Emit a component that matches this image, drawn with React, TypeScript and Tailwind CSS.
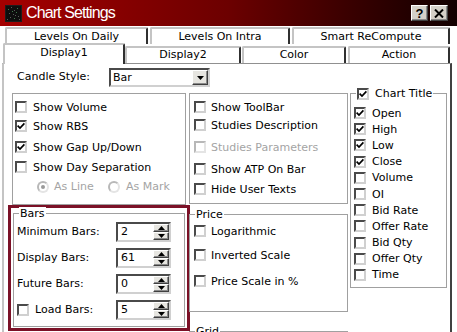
import React from 'react';

const sunken = 'border-2 border-t-[#4a4a4a] border-l-[#4a4a4a] border-r-[#d0d0d0] border-b-[#d0d0d0]';
const sunkenOff = 'border-2 border-t-[#b8b8b8] border-l-[#b8b8b8] border-r-[#e4e4e4] border-b-[#e4e4e4]';
const raised = 'border border-t-white border-l-white border-r-[#404040] border-b-[#404040] shadow-[inset_-1px_-1px_0_#8a8a8a]';

function CheckBox({ checked = false, disabled = false }: { checked?: boolean; disabled?: boolean }) {
  return (
    <span className={`flex shrink-0 items-center justify-center w-[12px] h-[12px] bg-white ${disabled ? sunkenOff : sunken}`}>
      {checked && (
        <svg width="8" height="8" viewBox="0 0 8 8">
          <path d="M0.6 3.6 L3 6 L7.4 1.4" fill="none" stroke="#000" strokeWidth="1.7" />
        </svg>
      )}
    </span>
  );
}

function Radio({ checked = false }: { checked?: boolean }) {
  return (
    <span className={`flex shrink-0 items-center justify-center w-[12px] h-[12px] rounded-full bg-white ${sunkenOff}`}>
      {checked && <span className="w-[4px] h-[4px] rounded-full bg-[#9a9a9a]" />}
    </span>
  );
}

interface RowProps {
  label: string;
  checked?: boolean;
  disabled?: boolean;
  gap?: string;
  className?: string;
}

function CheckRow({ label, checked, disabled, gap = 'ml-[6px]', className = '' }: RowProps) {
  return (
    <div className={`flex items-center h-[14px] ${className}`}>
      <CheckBox checked={checked} disabled={disabled} />
      <span className={`${gap} whitespace-nowrap leading-[13px] ${disabled ? 'text-[#a4a4a4]' : ''}`}>{label}</span>
    </div>
  );
}

function GroupBox({
  legend,
  className = '',
  children,
}: {
  legend?: React.ReactNode;
  className?: string;
  children?: React.ReactNode;
}) {
  return (
    <div className={`relative border border-[#a0a0a0] ${className}`}>
      {legend && (
        <div className="absolute -top-[7px] left-[5px] bg-white px-[1px] leading-[13px] flex items-center whitespace-nowrap">
          {legend}
        </div>
      )}
      {children}
    </div>
  );
}

function Spin({ value }: { value: string }) {
  return (
    <div className={`flex w-[55px] h-[20px] bg-white ${sunken}`}>
      <span className="flex-1 pl-[3px] leading-[16px]">{value}</span>
      <div className="flex flex-col w-[16px]">
        <div className={`flex-1 flex items-center justify-center bg-[#e6e5e0] ${raised}`}>
          <svg width="7" height="4" viewBox="0 0 7 4">
            <path d="M3.5 0 L7 4 L0 4 Z" fill="#000" />
          </svg>
        </div>
        <div className={`flex-1 flex items-center justify-center bg-[#e6e5e0] ${raised}`}>
          <svg width="7" height="4" viewBox="0 0 7 4">
            <path d="M0 0 L7 0 L3.5 4 Z" fill="#000" />
          </svg>
        </div>
      </div>
    </div>
  );
}

function Tab({
  label,
  className = '',
  selected = false,
}: {
  label: string;
  className?: string;
  selected?: boolean;
}) {
  return (
    <div
      className={`flex justify-center bg-white border-t-2 border-l-2 border-t-[#c4c4c4] border-l-[#c4c4c4] border-r-2 border-r-[#303030] rounded-t-[2px] leading-[13px] whitespace-nowrap ${
        selected ? 'relative z-10 -mb-[1px]' : ''
      } ${className}`}
    >
      {label}
    </div>
  );
}

function TitleBar() {
  return (
    <div className="flex items-center h-[26px] pl-[5px] pr-[9px] bg-linear-to-r from-[#a50000] via-[#6c0000] to-[#120000]">
      <svg width="17" height="17" viewBox="0 0 17 17" className="shrink-0">
        <rect width="17" height="17" fill="#1c1c1c" />
        <rect x="1" y="1" width="15" height="15" fill="#0e0e0e" />
        {[
          [3, 4], [6, 2], [9, 5], [12, 3], [4, 8], [8, 9], [11, 7], [13, 11], [5, 12], [9, 13], [2, 14], [14, 14], [7, 6], [10, 10],
        ].map(([x, y], i) => (
          <rect key={i} x={x} y={y} width="1" height="1" fill={i % 3 === 0 ? '#3f7a4a' : '#5a5a5a'} />
        ))}
      </svg>
      <span className="ml-[4px] text-white text-[16px] tracking-[-0.9px] font-['Liberation_Sans',Arial,sans-serif] leading-none">
        Chart Settings
      </span>
      <div className="ml-auto flex gap-[2px]">
        <div className={`flex items-center justify-center w-[17px] h-[16px] bg-[#d4d0c8] ${raised}`}>
          <span className="text-[13px] font-bold leading-none font-['Liberation_Sans',Arial,sans-serif]">?</span>
        </div>
        <div className={`flex items-center justify-center w-[18px] h-[16px] bg-[#d4d0c8] ${raised}`}>
          <svg width="10" height="9" viewBox="0 0 10 9">
            <path d="M1 0.5 L9 8.5 M9 0.5 L1 8.5" stroke="#000" strokeWidth="2" />
          </svg>
        </div>
      </div>
    </div>
  );
}

const chartItems: [string, boolean][] = [
  ['Open', true],
  ['High', true],
  ['Low', true],
  ['Close', true],
  ['Volume', false],
  ['OI', false],
  ['Bid Rate', false],
  ['Offer Rate', false],
  ['Bid Qty', false],
  ['Offer Qty', false],
  ['Time', false],
];

export default function App() {
  return (
    <div className="w-[457px] h-[332px] overflow-hidden bg-white text-[11px] text-black font-['DejaVu_Sans',Verdana,sans-serif]">
      <TitleBar />

      <div className="pt-[1px]">
        {/* back tab row */}
        <div className="flex gap-[2px] pl-[5px] h-[17px]">
          <Tab label="Levels On Daily" className="w-[143px] pt-[1px]" />
          <Tab label="Levels On Intra" className="w-[140px] pt-[1px]" />
          <Tab label="Smart ReCompute" className="w-[158px] pt-[1px]" />
        </div>

        {/* front tab row */}
        <div className="flex items-end pl-[3px] h-[19px]">
          <Tab label="Display1" selected className="w-[122px] h-[21px] pt-[1px]" />
          <Tab label="Display2" className="w-[116px] h-[17px]" />
          <Tab label="Color" className="ml-[1px] w-[104px] h-[17px]" />
          <Tab label="Action" className="ml-[2px] w-[102px] h-[17px]" />
        </div>

        {/* tab page */}
        <div className="ml-[2px] w-[450px] h-[270px] border-l-2 border-l-[#c4c4c4] border-t border-t-[#909090] border-r-2 border-r-[#404040]">
          {/* candle style */}
          <div className="flex items-center mt-[4px] h-[19px] pl-[13px]">
            <span className="w-[92px] whitespace-nowrap">Candle Style:</span>
            <div className={`flex w-[101px] h-[19px] bg-white ${sunken}`}>
              <span className="flex-1 pl-[2px] leading-[15px]">Bar</span>
              <div className={`flex items-center justify-center w-[16px] bg-[#e6e5e0] ${raised}`}>
                <svg width="7" height="4" viewBox="0 0 7 4">
                  <path d="M0 0 L7 0 L3.5 4 Z" fill="#000" />
                </svg>
              </div>
            </div>
          </div>

          <div className="flex items-start mt-[6px] pl-[4px]">
            {/* left column */}
            <div className="w-[182px] shrink-0">
              <GroupBox className="ml-[4px] w-[174px] h-[112px] pt-[6px] pl-[2px]">
                <CheckRow label="Show Volume" />
                <CheckRow label="Show RBS" checked className="mt-[5px]" />
                <CheckRow label="Show Gap Up/Down" checked className="mt-[7px]" />
                <CheckRow label="Show Day Separation" className="mt-[6px]" />
                <div className="flex items-center h-[14px] mt-[6px] pl-[22px] text-[#a4a4a4]">
                  <Radio checked />
                  <span className="ml-[5px] w-[54px]">As Line</span>
                  <Radio />
                  <span className="ml-[6px]">As Mark</span>
                </div>
              </GroupBox>

              <div className="w-[182px] h-[126px] border-[3px] border-[#7b1127]">
                <GroupBox
                  legend="Bars"
                  className="ml-[2px] mt-[5px] w-[172px] h-[114px] pt-[8px] pl-[3px] flex flex-col gap-[6px]"
                >
                  {[
                    ['Minimum Bars:', '2'],
                    ['Display Bars:', '61'],
                    ['Future Bars:', '0'],
                  ].map(([label, value]) => (
                    <div key={label} className="flex items-center h-[20px]">
                      <span className="w-[99px] whitespace-nowrap">{label}</span>
                      <Spin value={value} />
                    </div>
                  ))}
                  <div className="flex items-center h-[20px]">
                    <div className="flex items-center w-[99px]">
                      <CheckBox />
                      <span className="ml-[6px] whitespace-nowrap">Load Bars:</span>
                    </div>
                    <Spin value="5" />
                  </div>
                </GroupBox>
              </div>
            </div>

            {/* middle column */}
            <div className="-ml-[1px] w-[159px] shrink-0">
              <GroupBox className="h-[111px] pt-[6px] pl-[4px]">
                <CheckRow label="Show ToolBar" gap="ml-[5px]" />
                <CheckRow label="Studies Description" gap="ml-[5px]" className="mt-[4px]" />
                <CheckRow label="Studies Parameters" gap="ml-[5px]" disabled className="mt-[8px]" />
                <CheckRow label="Show ATP On Bar" gap="ml-[5px]" className="mt-[8px]" />
                <CheckRow label="Hide User Texts" gap="ml-[5px]" className="mt-[6px]" />
              </GroupBox>

              <GroupBox legend="Price" className="mt-[10px] h-[98px] pt-[9px] pl-[4px]">
                <CheckRow label="Logarithmic" gap="ml-[5px]" />
                <CheckRow label="Inverted Scale" gap="ml-[5px]" className="mt-[10px]" />
                <CheckRow label="Price Scale in %" gap="ml-[5px]" className="mt-[12px]" />
              </GroupBox>

              <GroupBox legend="Grid" className="mt-[19px] h-[40px]" />
            </div>

            {/* right column */}
            <div className="ml-[2px] w-[97px] shrink-0">
              <GroupBox
                legend={
                  <>
                    <CheckBox checked />
                    <span className="ml-[6px]">Chart Title</span>
                  </>
                }
                className="h-[195px] pt-[11px] pl-[3px] -mt-0"
              >
                {chartItems.map(([label, checked]) => (
                  <CheckRow key={label} label={label} checked={checked} className="h-[16.2px]" />
                ))}
              </GroupBox>
            </div>
          </div>
        </div>
      </div>
    </div>
  );
}
